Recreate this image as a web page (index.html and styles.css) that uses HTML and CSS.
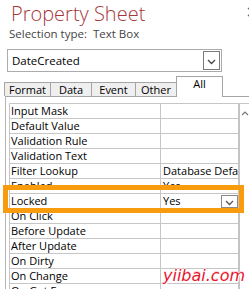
FILE: index.html
```html
<!DOCTYPE html>
<html>
<head>
    <meta charset="utf-8">
    <title>Property Sheet</title>
    <link rel="stylesheet" href="styles.css">
</head>
<body>
    <div class="sheet">
        <div class="head">
            <h1 class="title">Property Sheet</h1>
            <svg class="close" width="10" height="10" viewBox="0 0 10 10">
                <path d="M1 1 L9 9 M9 1 L1 9" stroke="#6d6d6d" stroke-width="1.3" fill="none"/>
            </svg>
        </div>
        <div class="seltype">Selection type:&nbsp; Text Box</div>

        <div class="combo">
            <span class="combo-text">DateCreated</span>
            <span class="combo-btn">
                <svg width="9" height="6" viewBox="0 0 9 6"><path d="M1 1 L4.5 4.5 L8 1" stroke="#444" stroke-width="1.3" fill="none"/></svg>
            </span>
        </div>

        <div class="tabs">
            <div class="tab t-format">Format</div>
            <div class="tab t-data">Data</div>
            <div class="tab t-event">Event</div>
            <div class="tab t-other">Other</div>
            <div class="tab active">All</div>
        </div>

        <div class="panel">
            <div class="grid">
                <div class="rows">
                    <div class="row"><div class="name">Input Mask</div><div class="val"></div></div>
                    <div class="row"><div class="name">Default Value</div><div class="val"></div></div>
                    <div class="row"><div class="name">Validation Rule</div><div class="val"></div></div>
                    <div class="row"><div class="name">Validation Text</div><div class="val"></div></div>
                    <div class="row"><div class="name">Filter Lookup</div><div class="val">Database Default</div></div>
                    <div class="row"><div class="name">Enabled</div><div class="val">Yes</div></div>
                    <div class="row"><div class="name">Locked</div><div class="val">Yes<span class="val-btn"><svg width="9" height="6" viewBox="0 0 9 6"><path d="M1 1 L4.5 4.5 L8 1" stroke="#555" stroke-width="1.3" fill="none"/></svg></span></div></div>
                    <div class="row"><div class="name">On Click</div><div class="val"></div></div>
                    <div class="row"><div class="name">Before Update</div><div class="val"></div></div>
                    <div class="row"><div class="name">After Update</div><div class="val"></div></div>
                    <div class="row"><div class="name">On Dirty</div><div class="val"></div></div>
                    <div class="row"><div class="name">On Change</div><div class="val"></div></div>
                    <div class="row"><div class="name">On Got Focus</div><div class="val"></div></div>
                </div>
                <div class="scroll">
                    <svg width="8" height="5" viewBox="0 0 8 5"><path d="M1 4 L4 1 L7 4" stroke="#777" stroke-width="1.2" fill="none"/></svg>
                </div>
            </div>
        </div>

        <div class="highlight"></div>
        <div class="mark">yiibai.com</div>
    </div>
</body>
</html>
```

FILE: styles.css
```css
*{
    margin: 0;
    padding: 0;
    box-sizing: border-box;
}
html, body{
    width: 249px;
    height: 289px;
    overflow: hidden;
    background: #fff;
}
body{
    font-family: "Segoe UI", "Open Sans", "Noto Sans", sans-serif;
    font-size: 11px;
    color: #000;
}

.sheet{
    position: relative;
    height: 289px;
}

.head{
    display: flex;
    align-items: center;
    height: 26px;
    padding-left: 11px;
    padding-top: 1px;
}
.title{
    font-size: 20px;
    font-weight: 300;
    line-height: 26px;
    color: #a4373a;
    flex: 1;
}
.close{
    margin-right: -8px;
    margin-top: -4px;
}

.seltype{
    padding-left: 9px;
    height: 18px;
    line-height: 16px;
    font-size: 11.5px;
    color: #444;
}

.combo{
    margin: 5px 0 0 7px;
    width: 215px;
    height: 23px;
    border: 1px solid #ababab;
    display: flex;
    align-items: center;
}
.combo-text{
    flex: 1;
    padding-left: 4px;
    font-size: 11.5px;
    line-height: 21px;
}
.combo-btn{
    width: 17px;
    height: 19px;
    margin-right: 1px;
    border: 1px solid #7a7a7a;
    display: flex;
    align-items: center;
    justify-content: center;
    padding-top: 2px;
}

.tabs{
    display: flex;
    align-items: flex-end;
    height: 20px;
    margin-top: 4px;
    padding-left: 4px;
}
.tab{
    height: 14px;
    line-height: 13px;
    text-align: center;
    background: #efefef;
    border: 1px solid #a5a5a5;
    border-left: none;
    border-bottom: none;
}
.t-format{ width: 47px; border-left: 1px solid #a5a5a5; }
.t-data{ width: 41px; }
.t-event{ width: 44px; }
.t-other{ width: 41px; }
.tab.active{
    width: 47px;
    height: 21px;
    margin-bottom: -1px;
    margin-left: -1px;
    background: #fff;
    border-left: 1px solid #a5a5a5;
    line-height: 14px;
    position: relative;
    z-index: 1;
}

.panel{
    border-top: 1px solid #a5a5a5;
    border-left: 1px solid #b5b5b5;
    margin-left: 5px;
    padding: 6px 0 0 3px;
    height: 200px;
}

.grid{
    display: flex;
    border-top: 1px solid #c6c6c6;
}
.rows{
    width: 231px;
    border-left: 1px solid #c6c6c6;
    border-right: 2px solid #c4c4c4;
}
.row{
    display: flex;
    height: 15px;
    border-bottom: 1px solid #c6c6c6;
}
.name{
    width: 151px;
    padding-left: 1px;
    border-right: 1px solid #c6c6c6;
    line-height: 14px;
    white-space: nowrap;
}
.val{
    flex: 1;
    display: flex;
    align-items: center;
    padding-left: 2px;
    line-height: 14px;
    white-space: nowrap;
    overflow: hidden;
}
.val-btn{
    margin-left: auto;
    width: 17px;
    height: 13px;
    border: 1px solid #8a8a8a;
    display: flex;
    align-items: flex-end;
    justify-content: center;
    padding-bottom: 1px;
}

.scroll{
    flex: 1;
    display: flex;
    justify-content: center;
    padding-top: 7px;
    padding-left: 1px;
}
.scroll svg{
    display: block;
}

.highlight{
    position: absolute;
    left: 3px;
    top: 185px;
    width: 241px;
    height: 28px;
    border: 5px solid #f89c0e;
}

.mark{
    position: absolute;
    left: 163px;
    top: 266px;
    font-family: "DejaVu Sans", sans-serif;
    font-size: 16px;
    font-style: italic;
    color: #e8162e;
    text-shadow: 1px 1px 0 #fff, -1px 0 0 #fff, 0 -1px 0 #ffd0d5;
}
```
